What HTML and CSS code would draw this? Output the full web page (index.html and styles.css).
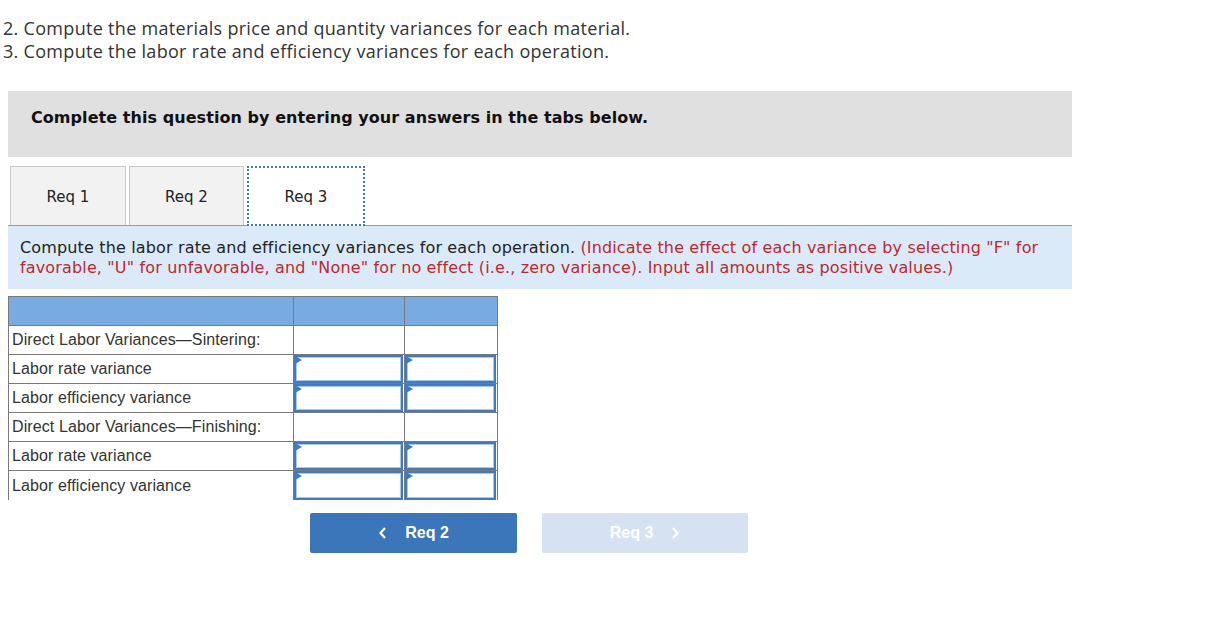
FILE: index.html
```html
<!DOCTYPE html>
<html>
<head>
<meta charset="utf-8">
<link rel="stylesheet" href="styles.css">
</head>
<body>
<div class="intro">
  <div>2. Compute the materials price and quantity variances for each material.</div>
  <div>3. Compute the labor rate and efficiency variances for each operation.</div>
</div>
<div class="main">
  <div class="question">Complete this question by entering your answers in the tabs below.</div>
  <div class="tabs">
    <div class="tab">Req 1</div>
    <div class="tab tab2">Req 2</div>
    <div class="tab active">Req 3</div>
  </div>
  <div class="instr">Compute the labor rate and efficiency variances for each operation. <span class="red">(Indicate the effect of each variance by selecting "F" for favorable, "U" for unfavorable, and "None" for no effect (i.e., zero variance). Input all amounts as positive values.)</span></div>
  <table class="grid">
    <tr class="head"><td class="c1"></td><td class="c2"></td><td class="c3"></td></tr>
    <tr><td class="c1">Direct Labor Variances—Sintering:</td><td></td><td></td></tr>
    <tr><td class="c1">Labor rate variance</td><td class="inp"><div class="box"></div></td><td class="inp"><div class="box"></div></td></tr>
    <tr><td class="c1">Labor efficiency variance</td><td class="inp"><div class="box"></div></td><td class="inp"><div class="box"></div></td></tr>
    <tr><td class="c1">Direct Labor Variances—Finishing:</td><td></td><td></td></tr>
    <tr><td class="c1">Labor rate variance</td><td class="inp"><div class="box"></div></td><td class="inp"><div class="box"></div></td></tr>
    <tr class="last"><td class="c1">Labor efficiency variance</td><td class="inp"><div class="box"></div></td><td class="inp"><div class="box"></div></td></tr>
  </table>
  <div class="nav">
    <div class="btn prev"><svg width="10" height="14" viewBox="0 0 10 14"><path d="M7 2 L2.5 7 L7 12" fill="none" stroke="#fff" stroke-width="2.2"/></svg><span>Req 2</span></div>
    <div class="btn next"><span>Req 3</span><svg width="10" height="14" viewBox="0 0 10 14"><path d="M3 2 L7.5 7 L3 12" fill="none" stroke="#fff" stroke-width="2.2"/></svg></div>
  </div>
</div>
</body>
</html>
```
FILE: styles.css
```css
body {
  margin: 0;
  background: #fff;
  font-family: "Liberation Sans", Arial, sans-serif;
  color: #333;
}
.intro {
  padding: 17px 0 0 3px;
  font-family: "Open Sans", "Liberation Sans", sans-serif;
  font-size: 18px;
  letter-spacing: 0.3px;
  line-height: 23px;
  color: #333;
}
.main {
  margin: 28px 0 0 8px;
  width: 1064px;
}
.question {
  height: 66px;
  background: #e0e0e0;
  box-sizing: border-box;
  padding: 17px 0 0 23px;
  font-family: "DejaVu Sans", Verdana, sans-serif;
  font-weight: bold;
  font-size: 16px;
  letter-spacing: 0.06px;
  line-height: 20px;
  color: #111;
}
.tabs {
  display: flex;
  margin-top: 9px;
  padding-left: 2px;
  gap: 3px;
  border-bottom: 1px solid #999;
}
.tab {
  width: 116px;
  height: 59px;
  box-sizing: border-box;
  border: 1px solid #c8c8c8;
  border-bottom: none;
  background: #f2f2f2;
  display: flex;
  align-items: center;
  justify-content: center;
  padding-top: 2px;
  font-family: "DejaVu Sans", Verdana, sans-serif;
  font-size: 15px;
  color: #222;
}
.tab2 { width: 115px; }
.tab.active {
  width: 118px;
  background: #fff;
  border: 2px dotted #3d78c0;
  margin-bottom: -1px;
  height: 60px;
}
.instr {
  background: #dbeaf8;
  padding: 12px 12px 11px 12px;
  font-family: "DejaVu Sans", Verdana, sans-serif;
  font-size: 16px;
  letter-spacing: 0.15px;
  line-height: 20px;
  color: #222;
}
.red { color: #c0272d; }
.grid {
  margin-top: 7px;
  border-collapse: separate;
  border-spacing: 0;
  border-top: 1px solid #7a7a7a;
  border-left: 1px solid #7a7a7a;
  font-size: 16px;
  letter-spacing: 0.1px;
  color: #333;
}
.grid td {
  border-right: 1px solid #7a7a7a;
  border-bottom: 1px solid #7a7a7a;
  height: 29px;
  padding: 0;
  box-sizing: border-box;
}
.grid td.c1 { width: 285px; padding-left: 3px; }
.grid tr td:nth-child(2) { width: 111px; }
.grid tr td:nth-child(3) { width: 93px; }
.grid tr.head td { background: #78abe2; }
.grid tr.last td { border-bottom: none; }
.grid td.inp { position: relative; }
.box {
  height: 28px;
  box-sizing: border-box;
  border: 2px solid #3f7bc4;
  box-shadow: inset 0 0 0 1px #a9c8ee;
  position: relative;
  margin: 0 1px 0 0;
}
tr.last .box { height: 29px; }
.box::before {
  content: "";
  position: absolute;
  left: -1px;
  top: -1px;
  border-left: 7px solid #3f7bc4;
  border-top: 4px solid transparent;
  border-bottom: 4px solid transparent;
}
.nav {
  display: flex;
  gap: 25px;
  margin: 13px 0 0 302px;
}
.btn {
  width: 207px;
  height: 40px;
  border-radius: 2px;
  display: flex;
  align-items: center;
  justify-content: center;
  gap: 17px;
  font-weight: bold;
  font-size: 16px;
  color: #fff;
}
.prev { background: #3a76b9; }
.next { background: #d6e2f1; width: 206px; }
```
